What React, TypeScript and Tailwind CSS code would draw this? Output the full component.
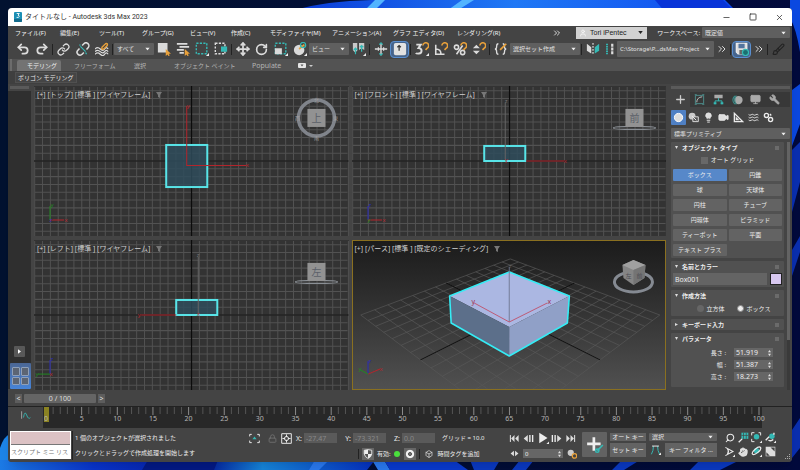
import React from "react";
import {
  Undo2, Redo2, Link, Move, RotateCw, Minus, Square, X, ChevronsRight, Brush, Lightbulb,
  Video, Wrench, Monitor, Lock, Search, Hand, Plus, Waves, User, Box,
} from "lucide-react";

const JP = "font-['Noto_Sans','Noto_Sans_CJK_JP',sans-serif]";

type SvgProps = { children: React.ReactNode; className?: string };
const Ico = ({ children, className = "size-[14px]" }: SvgProps) => (
  <svg viewBox="0 0 16 16" fill="none" stroke="currentColor" strokeWidth="1.4" className={`shrink-0 ${className}`} aria-hidden="true">
    {children}
  </svg>
);

const Fly = () => <path d="M16 12.5V16h-3.5z" fill="#eee" stroke="none" />;
const TEAL = "#35b9b5";
const GOLD = "#e9a13b";

const Tool = ({ label, children, active = false, narrow = false }: { label: string; children: React.ReactNode; active?: boolean; narrow?: boolean }) => (
  <button
    type="button"
    aria-label={label}
    className={`flex h-[17px] shrink-0 items-center justify-center text-[#dcdcdc] ${narrow ? "w-[15px]" : "w-[19px]"} ${
      active ? "rounded-sm border border-[#5a8fd0] bg-[#46648c]" : ""
    }`}
  >
    {children}
  </button>
);

const Sep = () => (
  <span className="flex h-[11px] w-[3px] shrink-0 justify-center">
    <span className="w-px bg-[#222]" />
  </span>
);

const Pick = ({ label, value, className }: { label: string; value: string; className: string }) => (
  <span className={`relative block shrink-0 ${className}`}>
    <select
      aria-label={label}
      className="block h-full w-full appearance-none rounded-[1px] bg-[#5f5f5f] pr-2 pl-[3px] text-[#e0e0e0] outline-none"
    >
      <option>{value}</option>
    </select>
    <svg viewBox="0 0 6 4" className="pointer-events-none absolute top-1/2 right-1 h-[3px] w-[5px] -translate-y-1/2" aria-hidden="true">
      <path d="M0 0h6L3 4z" fill="#eee" />
    </svg>
  </span>
);

const Wallpaper = () => (
  <svg viewBox="0 0 800 470" preserveAspectRatio="none" className="absolute inset-0 h-full w-full" aria-hidden="true">
    <defs>
      <linearGradient id="night" x1="0" x2="1">
        <stop offset="0" stopColor="#021230" />
        <stop offset="1" stopColor="#020a3c" />
      </linearGradient>
      <linearGradient id="petal" x1="0" x2="1">
        <stop offset="0" stopColor="#0a3bd8" />
        <stop offset="0.5" stopColor="#1f78f5" />
        <stop offset="1" stopColor="#0d49ee" />
      </linearGradient>
      <linearGradient id="floor" x1="0" x2="1">
        <stop offset="0" stopColor="#1c7be6" />
        <stop offset="0.25" stopColor="#0a35cf" />
        <stop offset="0.55" stopColor="#041c9c" />
        <stop offset="0.7" stopColor="#1787dd" />
        <stop offset="1" stopColor="#0630c2" />
      </linearGradient>
    </defs>
    <rect width="800" height="470" fill="url(#night)" />
    <path d="M295 10Q325 1 372 0H725L735 10z" fill="url(#petal)" />
    <path d="M375 0h10l-10 10h-10zM462 0h12l-16 10h-10z" fill="#52b4ff" />
    <path d="M655 0h68l12 12h-70z" fill="#0834d8" />
    <path d="M790 0h10v52q-4-24-10-34zM792 90l8-6v40l-8 22z" fill="#0b48e0" />
    <path d="M792 150l8-8v40l-8 30zM792 250l8-14v16l-8 24zM792 430l8-12v30l-8 10z" fill="#0a2fb0" />
    <path d="M0 448q4-12 10-14v36H0z" fill="#1d86ea" />
    <path d="M0 460h375l-8 10H0z" fill="url(#floor)" />
    <path d="M148 460h70l-4 10h-72z" fill="#041a86" />
    <path d="M315 460h14l-10 10h-10zM372 460h12l6 10h-12z" fill="#2b7bf2" />
    <path d="M384 460h70l14 10h-78z" fill="#0a3ad0" />
    <path d="M470 460h30l-6 10h-20zM520 460h14l-8 10h-14zM622 460h18l-16 10h-12zM700 460h40l-20 10h-30z" fill="#0b3ac4" />
  </svg>
);

const TitleBar = () => (
  <header className="flex h-[18px] shrink-0 items-center bg-white pr-2 pl-[6px] text-[#333]">
    <svg viewBox="0 0 8 10" className="h-[10px] w-2" aria-hidden="true">
      <rect width="8" height="10" rx="1" fill="#1c8fb5" />
      <path d="M0 7h8v2q0 1-1 1H1Q0 10 0 9z" fill="#146b8c" />
      <path d="M2.7 1.5h2.6L4 3.2q1.4.2 1.2 1.4T2.6 5.4" stroke="#fff" fill="none" strokeWidth=".9" />
    </svg>
    <h1 className="flex-1 pl-[3px] font-['Roboto','Noto_Sans_CJK_JP',sans-serif] text-[7px] leading-none">タイトルなし - Autodesk 3ds Max 2023</h1>
    <div className="flex items-center gap-[18px]">
      <button type="button" aria-label="最小化"><Minus size={9} strokeWidth={2} /></button>
      <button type="button" aria-label="最大化"><Square size={8} strokeWidth={2.5} /></button>
      <button type="button" aria-label="閉じる"><X size={9} strokeWidth={2} /></button>
    </div>
  </header>
);

const MENUS: [string, string][] = [
  ["ファイル(F)", "w-[45px]"],
  ["編集(E)", "w-[39px]"],
  ["ツール(T)", "w-[43px]"],
  ["グループ(G)", "w-[48px]"],
  ["ビュー(V)", "w-[41px]"],
  ["作成(C)", "w-[39px]"],
  ["モディファイヤ(M)", "w-[62px]"],
  ["アニメーション(A)", "w-[61px]"],
  ["グラフ エディタ(D)", "w-[64px]"],
  ["レンダリング(R)", "w-[60px]"],
];

const MenuBar = () => (
  <nav className="flex h-[13px] shrink-0 items-center bg-[#444] pl-[7px] text-[6px] leading-none text-[#f4f4f4]">
    {MENUS.map(([name, w]) => (
      <button key={name} type="button" className={`shrink-0 text-left whitespace-nowrap ${w}`}>{name}</button>
    ))}
    <span className="flex-1" />
    <ChevronsRight size={10} className="mr-[14px]" />
    <button type="button" className="flex h-[12px] w-[71px] items-center gap-[3px] bg-[#d2d2d2] pl-[3px] font-['Liberation_Sans',sans-serif] text-[7px] text-[#222]">
      <User size={8} className="text-white" />
      <span className="flex-1 text-left">Tori iPentec</span>
      <svg viewBox="0 0 6 4" className="mr-1 h-[3px] w-[5px]" aria-hidden="true"><path d="M0 0h6L3 4z" fill="#222" /></svg>
    </button>
    <span className="w-[55px] pr-[2px] text-right whitespace-nowrap">ワークスペース:</span>
    <Pick label="ワークスペース" value="既定値" className="mr-[2px] h-[11px] w-[88px]" />
  </nav>
);

const Cursor = () => <path d="M10 8v8l2-1.7 1.2 2 1.3-.8-1-2H16z" fill={GOLD} stroke="none" />;
const Magnet = () => <path d="M9 4a3.3 3.3 0 1 1 5 3l-2 2" stroke={GOLD} strokeWidth="1.8" />;

const Toolbar = () => (
  <div className="flex h-[20px] shrink-0 items-center overflow-hidden bg-[#444] pl-[5px] text-[6px] leading-none">
    <Tool label="元に戻す"><Undo2 size={14} strokeWidth={3} /></Tool>
    <Tool label="やり直し"><Redo2 size={14} strokeWidth={3} /></Tool>
    <Sep />
    <Tool label="リンク"><Link size={13} strokeWidth={2.4} /></Tool>
    <Tool label="リンク解除">
      <Ico><path d="M7 4l2-2a3.2 3.2 0 0 1 4.8 4.6L12 8.5M9 12l-2 2a3.2 3.2 0 0 1-4.8-4.6L4 7.5" strokeWidth="1.8" /><path d="M5 5l6 6M4 3l1 1M11 12l1 2" stroke={TEAL} /></Ico>
    </Tool>
    <Tool label="スペースワープにバインド">
      <Ico><path d="M0 8q3-3 6 0t5 0 4 0M0 11q3-3 6 0t5 0 4 0M0 14q3-3 6 0t5 0 4 0" /><path d="M8 6l4-4q3-1 2 2l-4 4q-3 1-2-2z" stroke={GOLD} strokeWidth="1.6" /></Ico>
    </Tool>
    <Sep />
    <Pick label="選択フィルタ" value="すべて" className="h-[12px] w-[40px]" />
    <Tool label="オブジェクトを選択"><Ico><path d="M1 1h11v11H1z" fill="#dadada" stroke="none" /><Cursor /></Ico></Tool>
    <Tool label="名前で選択"><Ico><path d="M1 2h12M4 5.5h11M1 9h8M4 12.5h5" strokeWidth="2" /><Cursor /></Ico></Tool>
    <Tool label="矩形選択"><Ico><path d="M1.5 1.5h12v12h-12z" stroke={TEAL} strokeDasharray="2.5 1.5" strokeWidth="1.6" /><Fly /></Ico></Tool>
    <Tool label="交差"><Ico><path d="M1.5 1.5h11v12h-11z" strokeDasharray="2.5 1.5" strokeWidth="1.6" /><path d="M8 5h7v6H8z" fill={TEAL} stroke="none" /></Ico></Tool>
    <Sep />
    <Tool label="移動"><Move size={14} strokeWidth={3} /></Tool>
    <Tool label="回転"><RotateCw size={13} strokeWidth={3} /></Tool>
    <Tool label="スケール"><Ico><path d="M1.5 1.5h12v12h-12z" stroke={TEAL} strokeDasharray="2.5 1.5" strokeWidth="1.6" /><path d="M1 7h8v7H1z" fill="#dadada" stroke="none" /><Fly /></Ico></Tool>
    <Tool label="配置"><Ico><circle cx="7" cy="9" r="6" fill="#dadada" stroke="none" /><path d="M7 8l6-5" stroke={GOLD} strokeWidth="2" /><circle cx="11.5" cy="3.5" r="3" stroke={TEAL} /><Fly /></Ico></Tool>
    <Pick label="参照座標系" value="ビュー" className="h-[12px] w-[40px]" />
    <Tool label="基点"><Ico><path d="M1 1h5v9l-2.5 2L1 9zM8 1h6v8l-3-2-3 2z" fill="#c8c8c8" stroke="none" /><path d="M4 14V7M2 9l2-2 2 2M11 11V4M9 6l2-2 2 2" stroke={TEAL} /><Fly /></Ico></Tool>
    <Sep />
    <Tool label="選択と操作"><Ico><path d="M8 1v14M1 8h14" strokeWidth="1.6" /><path d="M6 3l2-2 2 2M6 13l2 2 2-2" stroke={TEAL} /><path d="M5 6v4M11 6v4" /></Ico></Tool>
    <Tool label="キーボード ショートカット" active><Ico><rect x="1" y="1" width="14" height="14" rx="2" fill="#e2e2e2" stroke="none" /><path d="M7 10V4M5 6l2-2 2 2" stroke="#333" /></Ico></Tool>
    <Sep />
    <Tool label="スナップ"><Ico><path d="M1.5 3h5L4 7q3.5 0 3.5 3T4.5 13.2 1 12.5" strokeWidth="2.2" /><Magnet /><Fly /></Ico></Tool>
    <Tool label="角度スナップ"><Ico><path d="M2 3v11h10M2 8q6 0 6 6" strokeWidth="1.8" /><Magnet /></Ico></Tool>
    <Tool label="パーセント スナップ"><Ico><circle cx="4" cy="6" r="2.4" strokeWidth="1.8" /><circle cx="11" cy="12" r="2.4" strokeWidth="1.8" /><path d="M11 4L4 14" strokeWidth="1.8" /><Magnet /></Ico></Tool>
    <Tool label="スピナー スナップ"><Ico><path d="M1 7l4-4 4 4zM1 10l4 4 4-4z" fill="#dadada" stroke="none" /><Magnet /></Ico></Tool>
    <Sep />
    <Tool label="名前付き選択セット"><Ico><path d="M5 2Q3 2 3 5T1 8q2 0 2 3t2 3M10 2q2 0 2 3t2 3q-2 0-2 3t-2 3" strokeWidth="1.5" /><path d="M7 9l7-7" stroke={GOLD} strokeWidth="2" /></Ico></Tool>
    <Pick label="選択セット" value="選択セット作成" className="h-[12px] w-[70px]" />
    <Sep />
    <Tool label="ミラー"><Ico><path d="M1 2l5 4v7l-5-3z" fill="#dadada" stroke="none" /><path d="M8 1v14" strokeDasharray="2 1.5" /><path d="M15 2l-5 4v7l5-3z" fill={TEAL} stroke="none" /></Ico></Tool>
    <Tool label="位置合わせ" narrow><Ico className="size-[12px]"><path d="M4 1v14" strokeDasharray="2 1" stroke={TEAL} strokeWidth="2.5" /><path d="M11 1v14" strokeDasharray="4 1" strokeWidth="3" /></Ico></Tool>
    <Pick label="プロジェクト" value="C:\Storage\P...dsMax Project" className="h-[16px] w-[97px]" />
    <Tool label="さらに表示" narrow><ChevronsRight size={12} /></Tool>
    <Sep />
    <Tool label="自動バックアップ" active>
      <Ico><path d="M1.5 1.5h12v12h-10l-2-2z" fill="#ddd" stroke="#eee" /><path d="M4 2h7v5H4z" fill="#53759f" stroke="none" /><path d="M5 9h5v5H5z" fill="#666" stroke="none" /><circle cx="12" cy="12" r="3.5" fill="#1c6f70" stroke={TEAL} /></Ico>
    </Tool>
    <Tool label="他のツール" narrow><ChevronsRight size={12} /></Tool>
    <Sep />
    <Tool label="ペイント"><Brush size={13} className="text-[#222]" /></Tool>
  </div>
);

const Ribbon = () => (
  <section className="shrink-0 text-[6px] leading-none">
    <div className="flex h-[12px] items-end bg-[#535353] pl-[2px] text-[#b4b4b4]">
      <span className="mr-[5px] h-full w-[2px] bg-[#6c6c6c]" />
      <button type="button" className="h-[11px] w-[44px] rounded-t-[2px] bg-[#737373] pr-1 text-right text-[#eee]">モデリング</button>
      <button type="button" className="h-[11px] w-[73px] pl-[13px] text-left">フリーフォーム</button>
      <button type="button" className="h-[11px] w-[40px] text-left">選択</button>
      <button type="button" className="h-[11px] w-[78px] text-left">オブジェクト ペイント</button>
      <button type="button" className="h-[11px] w-[46px] text-left text-[7px]">Populate</button>
      <button type="button" aria-label="リボン表示" className="flex h-[11px] items-center gap-1">
        <svg viewBox="0 0 16 6" className="h-[6px] w-4" aria-hidden="true">
          <rect width="8" height="5" rx="1" fill="#e6e6e6" />
          <path d="M2.5 1.5h3L4 3.5z" fill="#555" />
          <path d="M11 2h4l-2 2z" fill="#ccc" />
        </svg>
      </button>
    </div>
    <div className="flex h-[13px] items-center bg-[#3f3f3f] pl-[7px]">
      <button type="button" className="h-[11px] border border-[#505050] bg-[#454545] px-[2px] whitespace-nowrap text-[#e6e6e6]">ポリゴン モデリング</button>
    </div>
  </section>
);

const steps = (n: number) => Array.from({ length: n }, (_, i) => i);
const RED = "#b3252c";
const GREEN = "#228822";
const BLUE = "#2a2ab8";

const Grid = () => (
  <g>
    <g stroke="#525252" strokeWidth="1">
      {steps(41).map((i) => <path key={`v${i}`} d={`M${157.3 + (i - 20) * 7.83} 1V150`} />)}
      {steps(20).map((i) => <path key={`h${i}`} d={`M1 ${75 + (i - 10) * 7.8}H313`} />)}
    </g>
    <path d="M157.3 0V150M0 75H314" stroke="#0c0c0c" strokeWidth="1.2" />
  </g>
);

type Tri = { up: string; upColor: string; side: string; sideColor: string; origin: string; originColor: string; left?: boolean };
const Tripod = ({ up, upColor, side, sideColor, origin, originColor, left = false }: Tri) => (
  <g fontSize="6" textAnchor="middle">
    <path d="M16 134V120" stroke={upColor} />
    <path d={left ? "M16 134H4" : "M16 134H30"} stroke={sideColor} />
    <text x="18" y="121" fill={upColor}>{up}</text>
    <text x={left ? 3 : 32} y="136" fill={sideColor}>{side}</text>
    <text x="17" y="136" fill={originColor}>{origin}</text>
  </g>
);

const FlatCube = ({ face, ring = false }: { face: string; ring?: boolean }) => (
  <g>
    {ring ? (
      <g>
        <circle cx="282" cy="32" r="18" fill="none" stroke="#80848b" strokeWidth="3.5" />
        <g fill="#a0a0a0" fontSize="5" textAnchor="middle">
          <text x="282" y="16">北</text><text x="282" y="54">南</text><text x="263" y="34">西</text><text x="301" y="34">東</text>
        </g>
      </g>
    ) : (
      <ellipse cx="282" cy="42" rx="21" ry="1.5" fill="none" stroke="#8a8f95" strokeWidth="1.2" />
    )}
    <rect x="273" y="23" width="18" height="18" fill="#929292" />
    <text x="282" y="36" fontSize="10" fill="#5b6069" textAnchor="middle">{face}</text>
  </g>
);

const View = ({ tags, children, active = false }: { tags: string; children: React.ReactNode; active?: boolean }) => (
  <section className={`relative min-h-0 min-w-0 overflow-hidden ${active ? "bg-linear-to-b from-[#1b1b1b] to-[#515151]" : "bg-[#333]"}`}>
    <svg viewBox="0 0 314 150" preserveAspectRatio="xMidYMid slice" className="absolute inset-0 h-full w-full" aria-hidden="true">{children}</svg>
    <div className="relative flex items-center gap-[6px] pt-[5px] pl-[3px] text-[7px] leading-none text-[#d0d0d0]">
      <span className="whitespace-pre">{tags}</span>
      <svg viewBox="0 0 6 6" className="size-[6px]" aria-hidden="true"><path d="M0 0h6L4 3v3L2 5V3z" fill="#777" /></svg>
    </div>
    {active && <span className="pointer-events-none absolute inset-0 border border-[#8a7020]" />}
  </section>
);

const project = (u: number, v: number) => {
  const d = (u + v) / 2;
  const t = (u - v) / 2;
  const w = 1 + 0.3345 * d;
  return `${158 + (149.3 * t) / w} ${75 - (74.7 * d) / w}`;
};

const Perspective = () => (
  <g>
    <g stroke="#585858" strokeWidth=".7">
      {steps(15).map((i) => {
        const k = (i - 7) / 7;
        return <path key={i} d={`M${project(k, -1)}L${project(k, 1)}M${project(-1, k)}L${project(1, k)}`} />;
      })}
    </g>
    <path d={`M${project(0, -1)}L${project(0, 1)}M${project(-1, 0)}L${project(1, 0)}`} stroke="#101010" />
    <path d="M157 32L217 56 157 87 97.500 56z" fill="#abb7e2" />
    <path d="M97.500 56L157 87V116L99 83z" fill="#5c6f8a" />
    <path d="M217 56L157 87V116L215 83z" fill="#90a0c7" />
    <path d="M157 32L217 56 215 83 157 116 99 83 97.500 56z" fill="none" stroke="#35ecf5" strokeWidth="1.600" strokeLinejoin="round" />
    <path d="M157 27V82" stroke="#6e7690" strokeWidth=".9" />
    <path d="M122 63L157 82 195 63" stroke="#c0506a" fill="none" strokeWidth=".9" />
    <g fontSize="7" textAnchor="middle">
      <text x="121" y="64" fill="#a03050">y</text><text x="197" y="64" fill="#a03050">x</text>
      <text x="158" y="28" fontSize="6" fill="#666">z</text>
    </g>
    <path d="M16 134V121" stroke={BLUE} /><path d="M16 134l12-5" stroke={RED} /><path d="M16 134l-7-4" stroke={GREEN} />
    <g fontSize="6" textAnchor="middle">
      <text x="18" y="123" fill={BLUE}>z</text><text x="29" y="131" fill={RED}>x</text><text x="8" y="131" fill={GREEN}>y</text>
    </g>
    <ellipse cx="281" cy="42" rx="19" ry="10" fill="none" stroke="#858a92" strokeWidth="3" />
    <path d="M281 20l12 5-1 13-11 7-10-7-1-13z" fill="#858585" />
    <path d="M281 20l12 5-12 5-11-5z" fill="#a0a0a0" />
    <path d="M281 30l12-5-1 13-11 7z" fill="#747474" />
    <g fontSize="6" fill="#4f4f55" textAnchor="middle">
      <text x="276" y="38">左</text><text x="287" y="38">前</text>
    </g>
  </g>
);

const BOX = { fill: "#2f4c5c", fillOpacity: 0.85, stroke: "#58e4e8", strokeWidth: 2 };

const Viewports = () => (
  <div className="grid min-w-0 flex-1 grid-cols-2 grid-rows-2 gap-x-[3px] gap-y-1 pt-[2px] pb-px">
    <View tags="[+] [トップ] [標準 ] [ワイヤフレーム]">
      <Grid />
      <rect x="132" y="59" width="41" height="42" {...BOX} />
      <path d="M152.5 20V79.5H212" stroke={RED} fill="none" />
      <g fontSize="6" fill={RED} textAnchor="middle"><text x="154" y="22">y</text><text x="213" y="81">x</text></g>
      <Tripod up="y" upColor={GREEN} side="x" sideColor={RED} origin="z" originColor={BLUE} />
      <FlatCube face="上" ring />
    </View>
    <View tags="[+] [フロント] [標準 ] [ワイヤフレーム]">
      <Grid />
      <rect x="132" y="60" width="41" height="15" {...BOX} />
      <path d="M174 75H212" stroke={RED} /><path d="M153 17V74" stroke="#666" />
      <g fontSize="6" fill={RED} textAnchor="middle"><text x="154" y="76">y</text><text x="213" y="77">x</text><text x="154" y="17" fill="#777">z</text></g>
      <Tripod up="z" upColor={BLUE} side="x" sideColor={RED} origin="y" originColor={GREEN} />
      <FlatCube face="前" />
    </View>
    <View tags="[+] [レフト] [標準 ] [ワイヤフレーム]">
      <Grid />
      <rect x="142" y="60" width="41" height="15" {...BOX} />
      <path d="M107 75H142" stroke={RED} /><path d="M164 17V74" stroke="#666" />
      <g fontSize="6" fill={RED} textAnchor="middle"><text x="105" y="77">y</text><text x="164" y="76">x</text><text x="164" y="17" fill="#777">z</text></g>
      <Tripod up="z" upColor={BLUE} side="y" sideColor={GREEN} origin="x" originColor={RED} left />
      <FlatCube face="左" />
    </View>
    <View tags="[+] [パース] [標準 ] [既定のシェーディング]" active><Perspective /></View>
  </div>
);

const LeftBar = () => (
  <aside className="flex w-[26px] shrink-0 flex-col pt-[2px] pr-[3px] pb-[2px]">
    <span className="mx-[2px] mb-[2px] h-[3px] bg-[#5a5a5a]" />
    <div className="flex flex-1 flex-col items-center justify-end bg-[#2f2f2f]">
      <button type="button" aria-label="展開" className="mb-[6px] flex size-[11px] items-center justify-center rounded-[1px] bg-[#585858]">
        <svg viewBox="0 0 4 6" className="h-[5px] w-[3px]" aria-hidden="true"><path d="M0 0l4 3-4 3z" fill="#fff" /></svg>
      </button>
      <button type="button" aria-label="4 分割レイアウト" className="ml-[2px] grid h-[26px] w-[21px] grid-cols-2 gap-px rounded-[1px] bg-linear-to-b from-[#4b6795] to-[#4684d8] px-[2px] py-[4px]">
        {steps(4).map((i) => <span key={i} className="rounded-[1px] border border-[#8fa0b8] bg-[#5c6573]" />)}
      </button>
    </div>
  </aside>
);

const Rollout = ({ title, open = true, children }: { title: string; open?: boolean; children?: React.ReactNode }) => (
  <section className="rounded-[1px] bg-[#515151] px-[2px]">
    <h2 className="flex h-[11px] items-center gap-1 pl-[2px] text-[6px] leading-none font-bold text-[#eee]">
      <svg viewBox="0 0 4 4" className="size-[3px]" aria-hidden="true"><path d={open ? "M0 0h4L2 4z" : "M0 0l4 2-4 2z"} fill="#ddd" /></svg>
      <span className="flex-1">{title}</span>
      <span className="mr-[3px] size-[4px] bg-[#6b6b6b]" />
    </h2>
    {children}
  </section>
);

const PRIMS = ["ボックス", "円錐", "球", "天球体", "円柱", "チューブ", "円環体", "ピラミッド", "ティーポット", "平面", "テキスト プラス"];
const PARAMS = [["長さ :", "51.919"], ["幅 :", "51.387"], ["高さ :", "18.273"]];

const Spin = () => (
  <svg viewBox="0 0 4 8" className="h-[6px] w-[3px] shrink-0" aria-hidden="true"><path d="M0 3l2-3 2 3zM0 5l2 3 2-3z" fill="#e0e0e0" /></svg>
);

const IconTab = ({ label, on, children }: { label: string; on?: boolean; children: React.ReactNode }) => (
  <button type="button" aria-label={label} className={`flex flex-1 items-center justify-center ${on ? "bg-[#444]" : ""}`}>{children}</button>
);
const Kind = ({ label, on, children }: { label: string; on?: boolean; children: React.ReactNode }) => (
  <button type="button" aria-label={label} className={`flex size-[15px] items-center justify-center rounded-[1px] ${on ? "bg-[#4f80c4]" : ""}`}>{children}</button>
);

const CommandPanel = () => (
  <aside className="flex w-[126px] shrink-0 flex-col overflow-hidden pt-[2px] pr-[2px] pb-px pl-[5px] text-[6px] leading-none text-[#ececec]">
    <span className="mb-[3px] h-[3px] shrink-0 bg-[#5a5a5a]" />
    <div className="mb-[3px] flex h-[15px] shrink-0 bg-[#383838] text-[#ccc]">
      <IconTab label="作成" on><Plus size={13} strokeWidth={2.4} /></IconTab>
      <IconTab label="修正"><Ico className="size-[11px]"><path d="M2 2h12v12H2zM1 1h3M12 1h3M1 15h3M12 15h3" stroke="#4d8d8a" /><path d="M4 12q0-7 8-8" stroke="#bbb" /></Ico></IconTab>
      <IconTab label="階層"><Ico className="size-[11px]"><path d="M2 1h12v5H2z" fill="#aaa" stroke="none" /><path d="M3 15v-5h10v5M8 10V6" stroke={TEAL} /><path d="M1 12h4v3H1zM11 12h4v3h-4z" fill={TEAL} stroke="none" /></Ico></IconTab>
      <IconTab label="モーション"><Ico className="size-[12px]"><circle cx="10" cy="8" r="5.5" fill="#aaa" stroke="none" /><path d="M5 2.5Q0 8 5 13.5M7 2Q3 8 7 14" stroke="#3a8f8c" /></Ico></IconTab>
      <IconTab label="表示"><Monitor size={11} fill="#aaa" className="text-[#aaa]" /></IconTab>
      <IconTab label="ユーティリティ"><Wrench size={11} fill="#aaa" className="-scale-x-100 text-[#aaa]" /></IconTab>
      <span className="w-[6px]" />
    </div>
    <div className="mb-[3px] flex h-[15px] shrink-0 pr-[13px]">
      <Kind label="ジオメトリ" on><Ico className="size-[11px]"><circle cx="8" cy="8" r="6" fill="#ddd" stroke="#fff" /></Ico></Kind>
      <Kind label="シェイプ"><Ico className="size-[11px]"><circle cx="6" cy="6" r="5" fill="#ccc" stroke="none" /><path d="M7 7h8v7H7z" fill="#555" stroke="#ddd" /><path d="M6 6l6 6" /></Ico></Kind>
      <Kind label="ライト"><Lightbulb size={11} fill="#ddd" /></Kind>
      <Kind label="カメラ"><Video size={11} fill="#ddd" /></Kind>
      <Kind label="ヘルパー"><Ico className="size-[11px]"><path d="M2 2v12h12zM5 9v2h2z" strokeWidth="2" /></Ico></Kind>
      <Kind label="スペース ワープ"><Waves size={11} /></Kind>
      <Kind label="システム"><Ico className="size-[11px]"><circle cx="5" cy="5" r="3" strokeWidth="2" /><circle cx="11" cy="11" r="3" strokeWidth="2" /><path d="M10 3l2 2" strokeWidth="2" /></Ico></Kind>
    </div>
    <Pick label="カテゴリ" value="標準プリミティブ" className="mb-[3px] h-[11px] w-full" />
    <div className="flex min-h-0 flex-1 gap-[3px]">
      <div className="flex min-w-0 flex-1 flex-col gap-[3px]">
        <Rollout title="オブジェクト タイプ">
          <label className="flex h-[14px] items-center justify-center gap-[3px]">
            <input type="checkbox" className="size-[7px] appearance-none bg-[#686868]" />オート グリッド
          </label>
          <div className="grid grid-cols-2 gap-x-[2px] gap-y-[3px] pt-[2px] pb-[2px]">
            {PRIMS.map((p, i) => (
              <button key={p} type="button" className={`h-[12px] rounded-[1px] ${i === 0 ? "bg-[#5788c9]" : "bg-[#636363]"}`}>{p}</button>
            ))}
          </div>
        </Rollout>
        <Rollout title="名前とカラー">
          <div className="flex items-center gap-[3px] pt-px pb-[2px]">
            <input aria-label="名前" defaultValue="Box001" className="h-[12px] min-w-0 flex-1 bg-[#646464] pl-[2px] text-[7px] outline-none" />
            <button type="button" aria-label="カラー" className="size-[12px] border border-[#222] bg-[#d8c8f0]" />
          </div>
        </Rollout>
        <Rollout title="作成方法">
          <div className="flex h-[15px] items-center justify-center gap-[12px] pl-3">
            <label className="flex items-center gap-[3px]"><input type="radio" name="method" className="size-[7px] appearance-none rounded-full bg-[#666]" />立方体</label>
            <label className="flex items-center gap-[3px]"><input type="radio" name="method" defaultChecked className="size-[7px] appearance-none rounded-full border border-[#888] bg-[#eee]" />ボックス</label>
          </div>
        </Rollout>
        <Rollout title="キーボード入力" open={false} />
        <Rollout title="パラメータ">
          <div className="flex h-[43px] flex-col gap-[3px] pt-[4px]">
            {PARAMS.map(([name, val]) => (
              <label key={name} className="flex items-center justify-end gap-2 pr-[9px]">
                <span>{name}</span>
                <span className="flex h-[9px] w-[39px] items-center bg-[#666] px-[2px]">
                  <input defaultValue={val} className="h-full w-full min-w-0 bg-transparent text-[7px] outline-none" />
                  <Spin />
                </span>
              </label>
            ))}
          </div>
        </Rollout>
      </div>
      <div className="w-[3px] bg-[#3a3a3a]"><div className="h-4/5 bg-[#636363]" /></div>
    </div>
  </aside>
);

const Timeline = () => (
  <section className="shrink-0 bg-[#444] leading-none">
    <div className="flex h-[15px] items-center gap-[2px] pl-[7px] text-[7px] text-[#ddd]">
      <button type="button" aria-label="前のフレーム" className="h-[9px] w-[7px] bg-[#5d5d5d]">&lt;</button>
      <button type="button" className="h-[9px] w-[72px] rounded-[1px] bg-[#656565]">0 / 100</button>
      <button type="button" aria-label="次のフレーム" className="h-[9px] w-[7px] bg-[#5d5d5d]">&gt;</button>
    </div>
    <div className="flex h-[23px] border-t border-[#222]">
      <div className="flex w-[35px] justify-center pt-[3px]">
        <Ico className="size-[10px]"><path d="M1 2v12" stroke="#aaa" /><path d="M4 12q2-12 5-4t6 4" stroke={TEAL} /></Ico>
      </div>
      <div className="mb-px flex-1 bg-[#282828] px-[3px] text-[#b5b5b5]">
        <div className="relative">
          <span className="absolute top-0 -left-[2px] h-[15px] w-[5px] bg-[#8a8222]" />
          <svg className="block h-[8px] w-full overflow-visible" aria-hidden="true">
            {steps(101).map((i) => (
              <line key={i} x1={`${i}%`} x2={`${i}%`} y1="0" y2={i % 5 ? 7 : 8} stroke={i % 5 ? "#555" : "#8a8a8a"} strokeWidth="1" />
            ))}
          </svg>
          <div className="relative flex justify-between text-[7px]">
            {steps(21).map((i) => <span key={i} className="flex w-0 justify-center">{i * 5}</span>)}
          </div>
        </div>
      </div>
      <div className="w-[30px]" />
    </div>
  </section>
);

const Coord = ({ axis, value }: { axis: string; value: string }) => (
  <label className="flex items-center gap-[2px]">
    <span className="w-[8px] text-right">{axis}:</span>
    <input defaultValue={value} className="h-[10px] w-[33px] bg-[#5a5a5a] pl-[2px] text-[#898989] outline-none" />
  </label>
);

const Btn = ({ label, children }: { label: string; children: React.ReactNode }) => (
  <button type="button" aria-label={label} className="flex size-[13px] items-center justify-center">{children}</button>
);

const StatusBar = () => (
  <footer className="relative flex h-[33px] shrink-0 bg-[#444] py-[2px] pl-[2px] text-[6px] leading-none text-[#ececec]">
    <div className="flex h-[28px] w-[61px] shrink-0 flex-col border border-white bg-white text-[#777]">
      <span className="h-[13px] border-b border-[#777] bg-[#dcc2c4]" />
      <span className="flex flex-1 items-center whitespace-nowrap">スクリプト ミニ リス</span>
    </div>
    <span className="mx-px h-[29px] w-px bg-[#222]" />
    <div className="flex min-w-0 flex-1 flex-col justify-between py-1 pl-px whitespace-nowrap">
      <p>1 個のオブジェクトが選択されました</p>
      <p>クリックとドラッグで作成処理を開始します</p>
    </div>
    <div className="flex w-[260px] shrink-0 flex-col justify-between">
      <div className="flex h-[14px] items-center gap-[7px] text-[7px]">
        <div className="flex gap-px">
          <Btn label="選択を分離"><Ico className="size-[11px]"><path d="M1 5V2h3M12 2h3v3M1 11v3h3M12 14h3v-3" /><path d="M5 9l3-4 3 4z" fill={TEAL} stroke="none" /></Ico></Btn>
          <span className="ml-1"><Btn label="選択をロック"><Lock size={9} className="text-[#777]" /></Btn></span>
          <Btn label="変換入力"><Ico className="size-[11px]"><path d="M1 1h14v14H1z" /><circle cx="8" cy="8" r="3" /><path d="M8 2v4M8 10v4M2 8h4M10 8h4" /></Ico></Btn>
        </div>
        <div className="-ml-[6px] flex gap-[6px]">
          <Coord axis="X" value="-27.47" />
          <Coord axis="Y" value="-73.321" />
          <Coord axis="Z" value="0.0" />
        </div>
        <span className="text-[6px] whitespace-nowrap">グリッド = 10.0</span>
      </div>
      <div className="flex h-[13px] items-center gap-[3px] pl-[110px] whitespace-nowrap">
        <span className="h-[10px] w-px bg-[#222]" />
        <button type="button" aria-label="セキュリティ" className="flex size-[12px] items-center justify-center bg-[#666]"><Ico className="size-[10px]"><path d="M2 2l6-1 6 1v6q-1 5-6 7-5-2-6-7z" fill="#555" stroke="#eee" /><path d="M8 1v7H2V2zM8 8h6q-1 5-6 7z" fill="#eee" stroke="none" /></Ico></button>
        <span>有効:</span>
        <span className="size-[6px] rounded-full bg-[#4ade3c]" />
        <button type="button" aria-label="設定" className="ml-px flex size-[12px] items-center justify-center bg-[#666]"><Ico className="size-[10px]"><circle cx="8" cy="8" r="6" fill="#eee" stroke="#fff" /><circle cx="8" cy="8" r="2.5" fill="#777" stroke="#444" /></Ico></button>
        <span className="h-[10px] w-px bg-[#222]" />
        <Box size={8} className="mx-[2px]" />
        <button type="button">時間タグを追加</button>
      </div>
    </div>
    <div className="flex w-[74px] shrink-0 flex-col justify-between">
      <div className="flex h-[14px] items-center gap-px">
        <Btn label="先頭へ"><Ico className="size-[11px]"><path d="M2 3v10" /><path d="M8 3v10L3 8zM14 3v10L9 8z" fill="#ddd" stroke="none" /></Ico></Btn>
        <Btn label="前へ"><Ico className="size-[11px]"><path d="M7 3v10L1 8z" fill="#ddd" stroke="none" /><path d="M10 3v10M14 3v10" strokeWidth="2" /></Ico></Btn>
        <Btn label="再生"><Ico className="size-[12px]"><path d="M3 1v14l11-7z" fill="#eee" stroke="none" /><Fly /></Ico></Btn>
        <Btn label="次へ"><Ico className="size-[11px]"><path d="M9 3v10l6-5z" fill="#ddd" stroke="none" /><path d="M2 3v10M6 3v10" strokeWidth="2" /></Ico></Btn>
        <Btn label="末尾へ"><Ico className="size-[11px]"><path d="M14 3v10" /><path d="M2 3v10l5-5zM8 3v10l5-5z" fill="#ddd" stroke="none" /></Ico></Btn>
      </div>
      <div className="flex h-[13px] items-center gap-[2px]">
        <Btn label="キー モード"><Ico className="size-[9px]"><path d="M7 3v10L1 8zM9 3v10l6-5z" fill="#ddd" stroke="none" /></Ico></Btn>
        <span className="flex h-[9px] w-[40px] items-center bg-[#666] px-[2px]">
          <input aria-label="現在のフレーム" defaultValue="0" className="w-full min-w-0 bg-transparent outline-none" /><Spin />
        </span>
        <Btn label="時間設定"><Ico className="size-[10px]"><circle cx="6" cy="6" r="5" fill="#ccc" stroke="none" /><circle cx="12" cy="11" r="3.5" stroke={GOLD} strokeWidth="2" /></Ico></Btn>
      </div>
    </div>
    <button type="button" aria-label="キーを設定" className="mt-px flex h-[25px] w-[25px] shrink-0 items-center justify-center rounded-[1px] bg-[#626262]">
      <Ico className="size-[18px]"><path d="M7 1v12M1 7h12" stroke="#eee" strokeWidth="2.4" /><path d="M10 13l5-5" stroke={TEAL} /><circle cx="10" cy="13" r="1.5" stroke={TEAL} /></Ico>
    </button>
    <div className="mt-[2px] ml-[3px] grid h-[24px] w-[107px] shrink-0 grid-cols-[36px_1fr] gap-x-[3px] gap-y-[2px]">
      <button type="button" className="bg-[#636363] whitespace-nowrap">オート キー</button>
      <Pick label="キー選択" value="選択" className="h-full w-full" />
      <button type="button" className="bg-[#636363] whitespace-nowrap">セット キー</button>
      <div className="flex gap-[3px]">
        <Btn label="接線"><Ico className="size-[11px]"><path d="M2 15Q5 10 5 3M14 15q-3-5-3-12" stroke={TEAL} /><path d="M3 3h10" /><Fly /></Ico></Btn>
        <button type="button" className="h-full flex-1 bg-[#636363] whitespace-nowrap">キー フィルタ ...</button>
      </div>
    </div>
    <div className="mr-[15px] ml-[6px] grid w-[54px] shrink-0 grid-cols-4 content-start gap-y-px">
      <Btn label="ズーム"><Search size={10} strokeWidth={2.5} className="-scale-x-100" /></Btn>
      <Btn label="全ビューをズーム"><Ico className="size-[11px]"><path d="M5 1h10v9H5z" fill={TEAL} stroke="none" /><path d="M8 1v9M12 1v9M5 5h10" stroke="#444" strokeWidth="1" /><path d="M1 15l5-5" strokeWidth="2" /></Ico></Btn>
      <Btn label="全範囲ズーム"><Ico className="size-[11px]"><path d="M1 5V1h4M11 1h3v4M1 10v4h4" /><circle cx="8" cy="7" r="4" fill={TEAL} stroke="none" /><Fly /></Ico></Btn>
      <Btn label="全ビュー全範囲ズーム"><Ico className="size-[11px]"><circle cx="10" cy="6" r="4" fill={TEAL} stroke="none" /><path d="M1 12l5-5M5 12q4 2 7-1M13 1v3" strokeWidth="2" /><Fly /></Ico></Btn>
      <Btn label="視野"><Ico className="size-[11px]"><path d="M2 2l11 6-11 6M5 4q3 4 0 8" strokeWidth="1.6" /><Fly /></Ico></Btn>
      <Btn label="パン"><Hand size={10} fill="#ddd" /></Btn>
      <Btn label="軌道"><Ico className="size-[11px]"><circle cx="8" cy="7" r="4" fill={TEAL} stroke="none" /><ellipse cx="8" cy="7" rx="7.5" ry="3" transform="rotate(-40 8 7)" strokeWidth="1.8" /><Fly /></Ico></Btn>
      <Btn label="最大化切り替え"><Ico className="size-[11px]"><path d="M1 1h14v14H1z" fill="#ddd" stroke="none" /><path d="M8 2h6v6zM2 9v5h5z" fill="#444" stroke="none" /></Ico></Btn>
    </div>
    <svg viewBox="0 0 6 6" className="absolute right-[2px] bottom-[2px] size-[6px]" aria-hidden="true">
      <path d="M5 0h1v1H5zM3 2h1v1H3zM5 2h1v1H5zM1 4h1v1H1zM3 4h1v1H3zM5 4h1v1H5z" fill="#aaa" />
    </svg>
  </footer>
);

export default function App() {
  return (
    <main className={`relative h-screen min-h-[470px] w-full overflow-hidden p-2 ${JP}`}>
      <Wallpaper />
      <div className="relative flex h-full flex-col overflow-hidden rounded-[4px] bg-[#444] shadow-lg">
        <TitleBar />
        <MenuBar />
        <Toolbar />
        <Ribbon />
        <div className="flex min-h-0 flex-1">
          <LeftBar />
          <Viewports />
          <CommandPanel />
        </div>
        <Timeline />
        <StatusBar />
      </div>
    </main>
  );
}
